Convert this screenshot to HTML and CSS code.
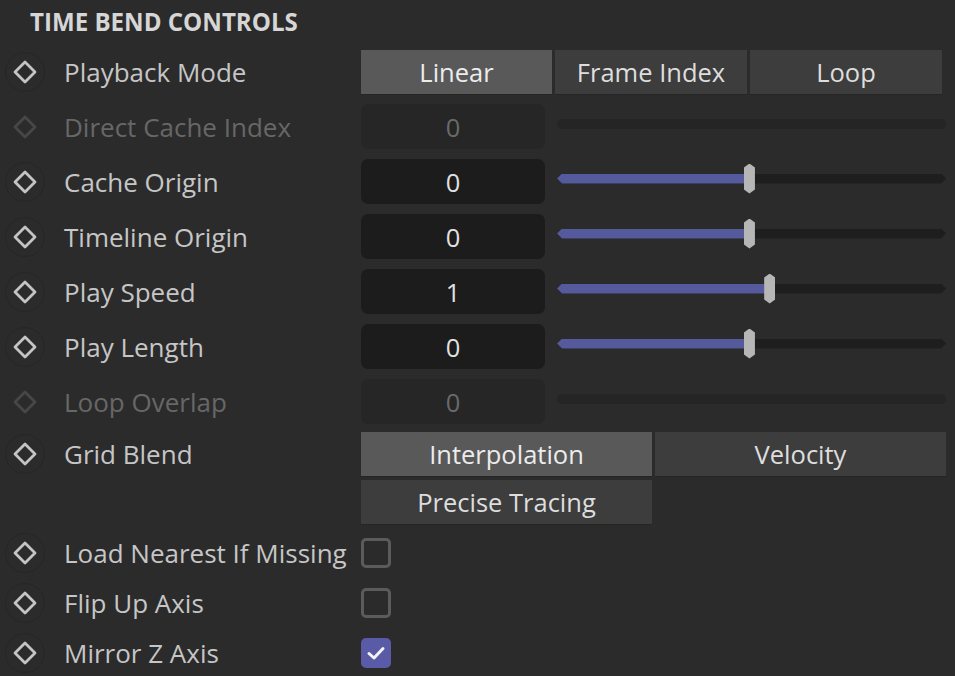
FILE: index.html
```html
<!DOCTYPE html>
<html>
<head>
<meta charset="utf-8">
<link rel="stylesheet" href="styles.css">
</head>
<body>
<div class="panel">
  <div class="header">TIME BEND CONTROLS</div>

  <div class="row row-buttons">
    <div class="key"><svg viewBox="0 0 26 26"><path d="M13 3 L23 13 L13 23 L3 13 Z"/></svg></div>
    <div class="label">Playback Mode</div>
    <div class="seg seg3">
      <div class="btn active">Linear</div>
      <div class="btn">Frame Index</div>
      <div class="btn">Loop</div>
    </div>
  </div>

  <div class="row row-num disabled">
    <div class="key"><svg viewBox="0 0 26 26"><path d="M13 3 L23 13 L13 23 L3 13 Z"/></svg></div>
    <div class="label">Direct Cache Index</div>
    <div class="numctl">
      <div class="field">0</div>
      <div class="slider"><div class="track off"></div></div>
    </div>
  </div>

  <div class="row row-num">
    <div class="key"><svg viewBox="0 0 26 26"><path d="M13 3 L23 13 L13 23 L3 13 Z"/></svg></div>
    <div class="label">Cache Origin</div>
    <div class="numctl">
      <div class="field">0</div>
      <div class="slider"><div class="track"><div class="fill" style="width:49.6%"></div></div><div class="thumb" style="left:49.6%"></div></div>
    </div>
  </div>

  <div class="row row-num">
    <div class="key"><svg viewBox="0 0 26 26"><path d="M13 3 L23 13 L13 23 L3 13 Z"/></svg></div>
    <div class="label">Timeline Origin</div>
    <div class="numctl">
      <div class="field">0</div>
      <div class="slider"><div class="track"><div class="fill" style="width:49.6%"></div></div><div class="thumb" style="left:49.6%"></div></div>
    </div>
  </div>

  <div class="row row-num">
    <div class="key"><svg viewBox="0 0 26 26"><path d="M13 3 L23 13 L13 23 L3 13 Z"/></svg></div>
    <div class="label">Play Speed</div>
    <div class="numctl">
      <div class="field">1</div>
      <div class="slider"><div class="track"><div class="fill" style="width:54.8%"></div></div><div class="thumb" style="left:54.8%"></div></div>
    </div>
  </div>

  <div class="row row-num">
    <div class="key"><svg viewBox="0 0 26 26"><path d="M13 3 L23 13 L13 23 L3 13 Z"/></svg></div>
    <div class="label">Play Length</div>
    <div class="numctl">
      <div class="field">0</div>
      <div class="slider"><div class="track"><div class="fill" style="width:49.6%"></div></div><div class="thumb" style="left:49.6%"></div></div>
    </div>
  </div>

  <div class="row row-num disabled">
    <div class="key"><svg viewBox="0 0 26 26"><path d="M13 3 L23 13 L13 23 L3 13 Z"/></svg></div>
    <div class="label">Loop Overlap</div>
    <div class="numctl">
      <div class="field">0</div>
      <div class="slider"><div class="track off"></div></div>
    </div>
  </div>

  <div class="row row-grid">
    <div class="key"><svg viewBox="0 0 26 26"><path d="M13 3 L23 13 L13 23 L3 13 Z"/></svg></div>
    <div class="label">Grid Blend</div>
    <div class="seg seg2">
      <div class="btn active">Interpolation</div>
      <div class="btn">Velocity</div>
      <div class="btn">Precise Tracing</div>
    </div>
  </div>

  <div class="row row-check first">
    <div class="key"><svg viewBox="0 0 26 26"><path d="M13 3 L23 13 L13 23 L3 13 Z"/></svg></div>
    <div class="label">Load Nearest If Missing</div>
    <div class="checkwrap"><div class="check"></div></div>
  </div>

  <div class="row row-check">
    <div class="key"><svg viewBox="0 0 26 26"><path d="M13 3 L23 13 L13 23 L3 13 Z"/></svg></div>
    <div class="label">Flip Up Axis</div>
    <div class="checkwrap"><div class="check"></div></div>
  </div>

  <div class="row row-check">
    <div class="key"><svg viewBox="0 0 26 26"><path d="M13 3 L23 13 L13 23 L3 13 Z"/></svg></div>
    <div class="label">Mirror Z Axis</div>
    <div class="checkwrap"><div class="check on"><svg viewBox="0 0 24 24"><path d="M5 12.5 L10 17 L19 7.5"/></svg></div></div>
  </div>
</div>
</body>
</html>
```

FILE: styles.css
```css
html, body {
  margin: 0;
  padding: 0;
  background: #2b2b2b;
}

body {
  font-family: "Open Sans", "Noto Sans", sans-serif;
  color: #c8c8c8;
  width: 955px;
  height: 676px;
  overflow: hidden;
}

.panel {
  display: flex;
  flex-direction: column;
}

.header {
  height: 44px;
  line-height: 43px;
  padding-left: 30px;
  font-weight: 700;
  font-size: 24.1px;
  color: #d6d6d6;
}

.row {
  display: grid;
  grid-template-columns: 50px 311px 585px;
  align-items: center;
}

.row-buttons {
  margin-top: 6px;
  height: 44px;
}

.row-num {
  margin-top: 10px;
  height: 45px;
}

.row-grid {
  margin-top: 8px;
  height: 91px;
  align-items: start;
}

.row-grid .key,
.row-grid .label {
  height: 44px;
}

.row-check {
  margin-top: 19px;
  height: 31px;
}

.row-check.first {
  margin-top: 12px;
}

.key {
  display: flex;
  align-items: center;
  justify-content: center;
  position: relative;
  height: 100%;
}

.key::before {
  content: "";
  position: absolute;
  left: 5px;
  top: 50%;
  width: 40px;
  height: 40px;
  margin-top: -20px;
  border-radius: 50%;
  border: 1px solid #262626;
  box-sizing: border-box;
}

.key svg {
  width: 26px;
  height: 26px;
  fill: none;
  stroke: #c4c4c4;
  stroke-width: 2.8;
  stroke-linejoin: round;
}

.disabled .key svg {
  stroke: #474747;
}

.disabled .key::before {
  display: none;
}

.label {
  padding-left: 14px;
  font-size: 26px;
  color: #c6c6c6;
  white-space: nowrap;
  display: flex;
  align-items: center;
  height: 100%;
}

.disabled .label {
  color: #676767;
}

.seg {
  display: grid;
  gap: 3px;
  font-size: 25.5px;
}

.seg3 {
  grid-template-columns: 191px 192px 192px;
  height: 44px;
}

.seg2 {
  grid-template-columns: 291px 291px;
  grid-auto-rows: 44px;
  row-gap: 4px;
}

.btn {
  background: #3d3d3d;
  color: #dedede;
  display: flex;
  align-items: center;
  justify-content: center;
  box-shadow: 0 1px 0 #252525;
}

.btn.active {
  background: #595959;
  color: #ececec;
}

.numctl {
  display: flex;
  align-items: center;
  height: 45px;
}

.field {
  width: 184px;
  height: 45px;
  border-radius: 7px;
  background: #1c1c1c;
  color: #e2e2e2;
  font-size: 25.5px;
  display: flex;
  align-items: center;
  justify-content: center;
}

.disabled .field {
  background: #262626;
  color: #6a6a6a;
}

.slider {
  margin-left: 12px;
  width: 389px;
  height: 30px;
  margin-top: -6px;
  position: relative;
  display: flex;
  align-items: center;
}

.track {
  width: 100%;
  height: 10px;
  background: #1e1e1e;
  clip-path: polygon(5px 0, calc(100% - 5px) 0, 100% 50%, calc(100% - 5px) 100%, 5px 100%, 0 50%);
}

.track.off {
  background: #252525;
  clip-path: none;
  border-radius: 5px;
}

.fill {
  height: 100%;
  background: #555a9c;
}

.thumb {
  position: absolute;
  top: 0;
  width: 11px;
  height: 30px;
  margin-left: -6px;
  background: #b6b6b6;
  clip-path: polygon(50% 0, 100% 4px, 100% calc(100% - 4px), 50% 100%, 0 calc(100% - 4px), 0 4px);
}

.check {
  width: 30px;
  height: 30px;
  box-sizing: border-box;
  border: 3px solid #5b5b5b;
  border-radius: 5px;
  display: flex;
  align-items: center;
  justify-content: center;
}

.check.on {
  background: #5a5ba6;
  border-color: #5a5ba6;
}

.check svg {
  width: 24px;
  height: 24px;
  fill: none;
  stroke: #f4f4f4;
  stroke-width: 3;
  stroke-linecap: round;
  stroke-linejoin: round;
}
```
